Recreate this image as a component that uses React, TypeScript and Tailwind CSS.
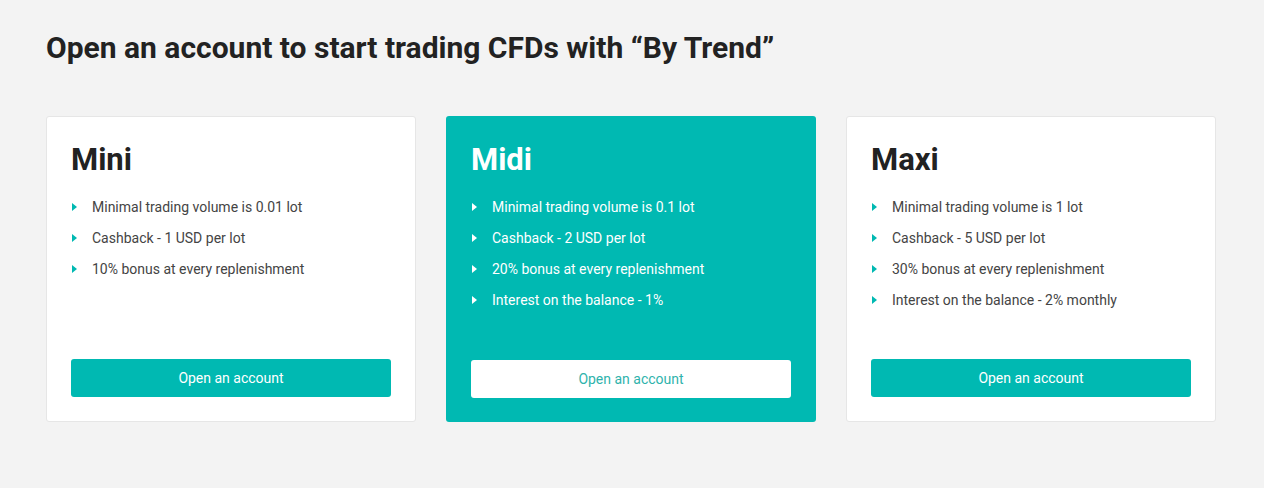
const plans = [
  {
    name: "Mini",
    items: [
      "Minimal trading volume is 0.01 lot",
      "Cashback - 1 USD per lot",
      "10% bonus at every replenishment",
    ],
    active: false,
  },
  {
    name: "Midi",
    items: [
      "Minimal trading volume is 0.1 lot",
      "Cashback - 2 USD per lot",
      "20% bonus at every replenishment",
      "Interest on the balance - 1%",
    ],
    active: true,
  },
  {
    name: "Maxi",
    items: [
      "Minimal trading volume is 1 lot",
      "Cashback - 5 USD per lot",
      "30% bonus at every replenishment",
      "Interest on the balance - 2% monthly",
    ],
    active: false,
  },
];

function Arrow({ white }: { white: boolean }) {
  return (
    <svg width="5" height="8" viewBox="0 0 5 8" className="shrink-0">
      <path d="M0 0 L5 4 L0 8 Z" fill={white ? "#ffffff" : "#00b9b2"} />
    </svg>
  );
}

export default function App() {
  return (
    <div
      className="min-h-screen bg-[#f3f3f3] px-[46px] pt-[31px] pb-10"
      style={{ fontFamily: "Roboto, 'Liberation Sans', sans-serif" }}
    >
      <h1 className="text-[30px] font-bold text-[#222222] leading-[34px]">
        Open an account to start trading CFDs with “By Trend”
      </h1>

      <div className="mt-[51px] grid grid-cols-3 gap-[30px] w-[1170px]">
        {plans.map((p) => (
          <div
            key={p.name}
            className={
              p.active
                ? "h-[306px] flex flex-col rounded-[3px] bg-[#00b9b2] px-[25px] pt-[25px] pb-[24px]"
                : "h-[306px] flex flex-col rounded-[3px] bg-white border border-[#e6e6e6] px-[24px] pt-[24px] pb-[24px]"
            }
          >
            <h2
              className={
                p.active
                  ? "text-[31px] font-bold leading-[38px] text-white"
                  : "text-[31px] font-bold leading-[38px] text-[#222222]"
              }
            >
              {p.name}
            </h2>
            <ul className="mt-[18px] flex flex-col gap-[11px]">
              {p.items.map((it) => (
                <li key={it} className="flex items-center h-[20px]">
                  <span className="w-[21px] pl-[1px] flex items-center">
                    <Arrow white={p.active} />
                  </span>
                  <span
                    className={
                      p.active
                        ? "text-[14px] text-white"
                        : "text-[14px] text-[#444444]"
                    }
                  >
                    {it}
                  </span>
                </li>
              ))}
            </ul>
            <button
              className={
                p.active
                  ? "mt-auto h-[38px] w-full rounded-[3px] bg-white text-[14px] text-[#2fb3ac]"
                  : "mt-auto h-[38px] w-full rounded-[3px] bg-[#00b9b2] text-[14px] text-white"
              }
            >
              Open an account
            </button>
          </div>
        ))}
      </div>
    </div>
  );
}
